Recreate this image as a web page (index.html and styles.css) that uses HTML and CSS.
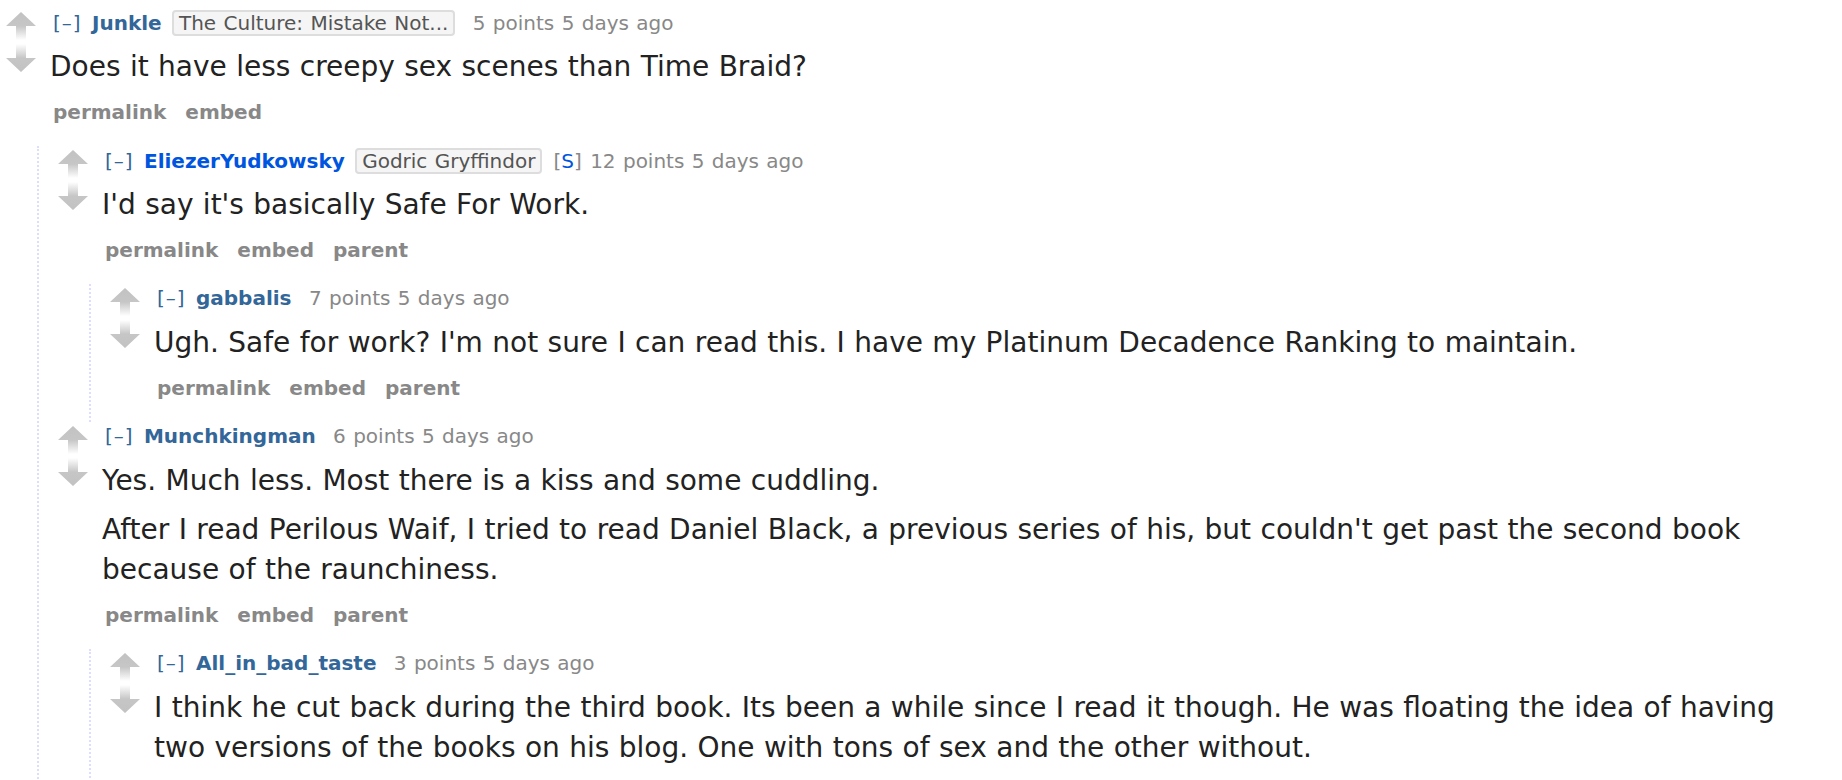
FILE: index.html
```html
<!DOCTYPE html>
<html lang="en">
<head>
<meta charset="utf-8">
<title>Comments</title>
<link rel="stylesheet" href="styles.css">
</head>
<body>
<svg class="defs" width="0" height="0" aria-hidden="true">
  <defs>
    <linearGradient id="gu" x1="0" y1="0" x2="0" y2="1">
      <stop offset="0" stop-color="#c2c2c2"/>
      <stop offset="0.5" stop-color="#c6c6c6"/>
      <stop offset="1" stop-color="#ffffff"/>
    </linearGradient>
    <linearGradient id="gd" x1="0" y1="1" x2="0" y2="0">
      <stop offset="0" stop-color="#c2c2c2"/>
      <stop offset="0.5" stop-color="#c6c6c6"/>
      <stop offset="1" stop-color="#ffffff"/>
    </linearGradient>
  </defs>
</svg>

<div class="comment">
  <div class="midcol">
    <svg class="arrow" viewBox="0 0 30 28"><path d="M15 0 L30 14 L20 14 L20 28 L10 28 L10 14 L0 14 Z" fill="url(#gu)"/></svg>
    <svg class="arrow down" viewBox="0 0 30 28"><path d="M15 28 L30 14 L20 14 L20 0 L10 0 L10 14 L0 14 Z" fill="url(#gd)"/></svg>
  </div>
  <div class="entry">
    <p class="tagline"><a class="expand">[&ndash;]</a> <a class="author">Junkle</a> <span class="flair">The Culture: Mistake Not...</span> <span class="score">5 points</span> <span class="time">5 days ago</span></p>
    <div class="md"><p>Does it have less creepy sex scenes than Time Braid?</p></div>
    <ul class="buttons"><li>permalink</li><li>embed</li></ul>
  </div>
  <div class="child">

    <div class="comment">
      <div class="midcol">
        <svg class="arrow" viewBox="0 0 30 28"><path d="M15 0 L30 14 L20 14 L20 28 L10 28 L10 14 L0 14 Z" fill="url(#gu)"/></svg>
        <svg class="arrow down" viewBox="0 0 30 28"><path d="M15 28 L30 14 L20 14 L20 0 L10 0 L10 14 L0 14 Z" fill="url(#gd)"/></svg>
      </div>
      <div class="entry">
        <p class="tagline"><a class="expand">[&ndash;]</a> <a class="author submitter">EliezerYudkowsky</a> <span class="flair">Godric Gryffindor</span><span class="userattrs">[<a class="s">S</a>]</span> <span class="score">12 points</span> <span class="time">5 days ago</span></p>
        <div class="md"><p>I'd say it's basically Safe For Work.</p></div>
        <ul class="buttons"><li>permalink</li><li>embed</li><li>parent</li></ul>
      </div>
      <div class="child">

        <div class="comment">
          <div class="midcol">
            <svg class="arrow" viewBox="0 0 30 28"><path d="M15 0 L30 14 L20 14 L20 28 L10 28 L10 14 L0 14 Z" fill="url(#gu)"/></svg>
            <svg class="arrow down" viewBox="0 0 30 28"><path d="M15 28 L30 14 L20 14 L20 0 L10 0 L10 14 L0 14 Z" fill="url(#gd)"/></svg>
          </div>
          <div class="entry">
            <p class="tagline"><a class="expand">[&ndash;]</a> <a class="author">gabbalis</a> <span class="score">7 points</span> <span class="time">5 days ago</span></p>
            <div class="md"><p>Ugh. Safe for work? I'm not sure I can read this. I have my Platinum Decadence Ranking to maintain.</p></div>
            <ul class="buttons"><li>permalink</li><li>embed</li><li>parent</li></ul>
          </div>
        </div>

      </div>
    </div>

    <div class="comment">
      <div class="midcol">
        <svg class="arrow" viewBox="0 0 30 28"><path d="M15 0 L30 14 L20 14 L20 28 L10 28 L10 14 L0 14 Z" fill="url(#gu)"/></svg>
        <svg class="arrow down" viewBox="0 0 30 28"><path d="M15 28 L30 14 L20 14 L20 0 L10 0 L10 14 L0 14 Z" fill="url(#gd)"/></svg>
      </div>
      <div class="entry">
        <p class="tagline"><a class="expand">[&ndash;]</a> <a class="author">Munchkingman</a> <span class="score">6 points</span> <span class="time">5 days ago</span></p>
        <div class="md"><p>Yes. Much less. Most there is a kiss and some cuddling.</p><p>After I read Perilous Waif, I tried to read Daniel Black, a previous series of his, but couldn't get past the second book because of the raunchiness.</p></div>
        <ul class="buttons"><li>permalink</li><li>embed</li><li>parent</li></ul>
      </div>
      <div class="child">

        <div class="comment">
          <div class="midcol">
            <svg class="arrow" viewBox="0 0 30 28"><path d="M15 0 L30 14 L20 14 L20 28 L10 28 L10 14 L0 14 Z" fill="url(#gu)"/></svg>
            <svg class="arrow down" viewBox="0 0 30 28"><path d="M15 28 L30 14 L20 14 L20 0 L10 0 L10 14 L0 14 Z" fill="url(#gd)"/></svg>
          </div>
          <div class="entry">
            <p class="tagline"><a class="expand">[&ndash;]</a> <a class="author">All_in_bad_taste</a> <span class="score">3 points</span> <span class="time">5 days ago</span></p>
            <div class="md"><p>I think he cut back during the third book. Its been a while since I read it though. He was floating the idea of having two versions of the books on his blog. One with tons of sex and the other without.</p></div>
          </div>
        </div>

      </div>
    </div>

  </div>
</div>
</body>
</html>
```

FILE: styles.css
```css
html, body {
  margin: 0;
  padding: 0;
  background: #ffffff;
  overflow: hidden;
}

body {
  padding-top: 8px;
  font-family: "DejaVu Sans", Verdana, sans-serif;
  color: #222222;
}

.defs {
  position: absolute;
  width: 0;
  height: 0;
}

.comment {
  display: grid;
  grid-template-columns: 50px 1fr;
  padding-top: 2px;
}

.midcol {
  grid-column: 1;
  padding-left: 6px;
  padding-top: 2px;
  display: flex;
  flex-direction: column;
  gap: 4px;
}

.arrow {
  display: block;
  width: 30px;
  height: 28px;
}

.entry {
  grid-column: 2;
  padding-bottom: 22px;
}

.child {
  grid-column: 1 / -1;
  margin-left: 37px;
  border-left: 2px dotted #ddddff;
  padding-left: 13px;
}

.tagline {
  margin: 0;
  font-size: 20px;
  line-height: 24px;
  height: 24px;
  color: #888888;
  white-space: nowrap;
  word-spacing: 1px;
}

.expand {
  color: #336699;
  padding-left: 3px;
  margin-right: 3px;
  letter-spacing: 1px;
}

.author {
  color: #336699;
  font-weight: bold;
  margin-right: 3px;
}

.author + .score {
  margin-left: 7px;
}

.author.submitter {
  color: #0055df;
}

.flair {
  display: inline-block;
  margin-right: 10px;
  padding: 0 5px;
  border: 2px solid #dddddd;
  border-radius: 4px;
  background: #f5f5f5;
  color: #545454;
  line-height: 22px;
}

.userattrs {
  color: #888888;
  margin-left: 1px;
  margin-right: 1px;
}

.userattrs .s {
  color: #0055df;
}

.md {
  margin-top: 13px;
  max-width: 1660px;
  font-size: 28px;
  line-height: 40px;
  word-spacing: 0.5px;
  color: #222222;
}

.md p {
  margin: 0 0 9px 0;
}

.md p:last-child {
  margin-bottom: 0;
}

.buttons {
  list-style: none;
  margin: 13px 0 0 0;
  padding: 0 0 0 1px;
  display: flex;
  font-size: 20px;
  line-height: 24px;
  font-weight: bold;
  color: #888888;
}

.buttons li {
  padding: 0 2px;
  margin-right: 15px;
}
```
